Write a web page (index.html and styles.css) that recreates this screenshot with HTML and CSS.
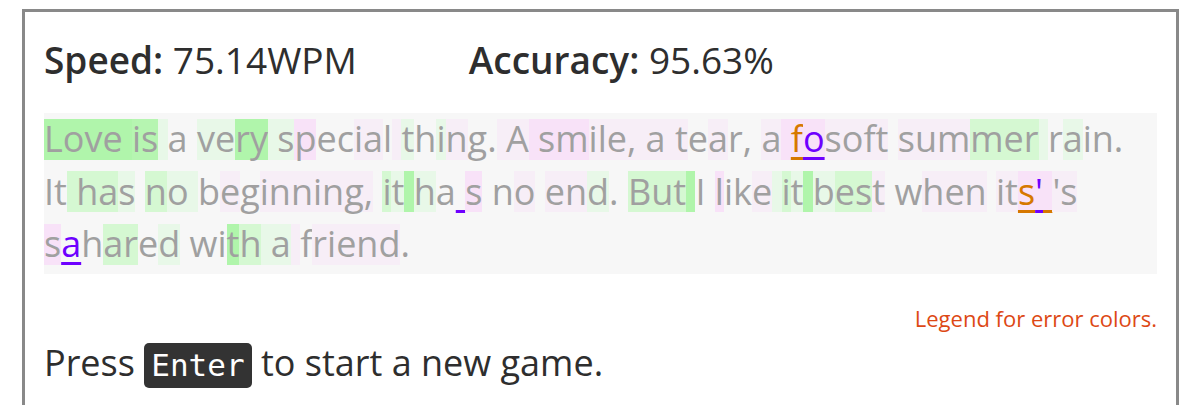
FILE: index.html
```html
<!DOCTYPE html>
<html lang="en">
<head>
<meta charset="utf-8">
<title>Typing result</title>
<link rel="stylesheet" href="styles.css">
</head>
<body>
<main class="panel">
  <div class="stats">
    <div class="stat"><b>Speed:</b> 75.14WPM</div>
    <div class="stat"><b>Accuracy:</b> 95.63%</div>
  </div>
  <p class="typed"><span class="g1">Love </span><span class="g1b">is</span><span class="g3"> </span>a <span class="g3">ve</span><span class="g1">ry</span><span class="g3"> s</span><span class="p1">p</span>ec<span class="p2">ia</span>l<span class="p2"> </span><span class="g3">t</span>h<span class="g3">i</span><span class="p2">n</span>g.<span class="p2"> A</span><span class="p1"> sm</span><span class="p2">ile, a t</span>e<span class="p2">a</span>r, <span class="p2">a</span><span class="p1"> </span><span class="p1 eo">f</span><span class="p1 ep">o</span><span class="p2">soft</span> <span class="p2">sum</span><span class="g2">mer</span><span class="g3"> </span>r<span class="g3">a</span>in. <br>It<span class="g2"> ha</span><span class="g3">s</span> <span class="g2">n</span><span class="g3">o </span>b<span class="p2">e</span>g<span class="p2">inning,</span> <span class="g2">i</span><span class="g3">t</span><span class="g1"> </span><span class="g3">h</span>a<span class="ep"> </span><span class="p1">s</span> n<span class="p2">o</span> <span class="p2">en</span><span class="g3">d</span>. <span class="g2">But</span><span class="g1"> </span>I <span class="p1">l</span>ik<span class="p2">e</span><span class="g3"> </span><span class="g2">i</span><span class="g3">t</span><span class="g1"> </span><span class="g3">b</span><span class="g2">es</span><span class="p2">t</span> w<span class="p2">hen</span> <span class="p2">it</span><span class="p1 eo">s</span><span class="p1 ep">'</span><span class="p1 eo"> </span><span class="p2">'s</span> <br><span class="p1">s</span><span class="ep">a</span>h<span class="g2">ar</span>e<span class="g3">d</span> wi<span class="g1">t</span><span class="g2">h</span><span class="g3"> a</span><span class="p2"> </span>f<span class="p2">riend</span>.</p>
  <p class="legend">Legend for error colors.</p>
  <p class="prompt">Press <kbd class="key">Enter</kbd> to start a new game.</p>
</main>
</body>
</html>
```

FILE: styles.css
```css
html, body {
  margin: 0;
  padding: 0;
  background: #ffffff;
}

body {
  font-family: "Open Sans", "Noto Sans", sans-serif;
  color: #333333;
}

.panel {
  box-sizing: border-box;
  width: 1157px;
  margin: 9px 0 0 22px;
  padding: 23px 19px 19px;
  border: 3px solid #898989;
}

.stats {
  display: flex;
  gap: 112px;
  font-size: 37px;
  line-height: 49px;
  color: #2e2e2e;
}

.stat b {
  font-weight: 600;
}

.typed {
  margin: 29px 0 0;
  padding: 0 0 3px;
  background: #f7f7f7;
  font-size: 36px;
  line-height: 52.5px;
  color: #a0a0a0;
}

.typed span {
  --hl: transparent;
  background-image: linear-gradient(var(--hl), var(--hl));
  background-repeat: no-repeat;
  background-position: 0 4.5px;
  background-size: 100% 41px;
}

.g1 { --hl: #b0f5ab !important; }
.g1b { --hl: #b6f5b1 !important; }
.g2 { --hl: #d5f8d2 !important; }
.g3 { --hl: #e8f8e8 !important; }
.p1 { --hl: #f8e2f8 !important; }
.p2 { --hl: #f7eef7 !important; }

.eo,
.ep {
  text-decoration-line: underline;
  text-decoration-thickness: 3px;
  text-underline-offset: 5px;
  text-decoration-skip-ink: none;
}

.eo {
  color: #d67800;
  text-decoration-color: #d67800;
}

.ep {
  color: #6e00ff;
  text-decoration-color: #6e00ff;
}

.legend {
  margin: 29px 0 0;
  text-align: right;
  font-size: 22px;
  line-height: 30px;
  color: #dd4814;
}

.prompt {
  margin: 5px 0 0;
  font-size: 36px;
  line-height: 49px;
  color: #2e2e2e;
}

.key {
  display: inline-block;
  line-height: 36px;
  padding: 4px 7px 5px;
  border-radius: 5px;
  background: #333333;
  color: #ffffff;
  font-family: "DejaVu Sans Mono", monospace;
  font-size: 31px;
}
```
